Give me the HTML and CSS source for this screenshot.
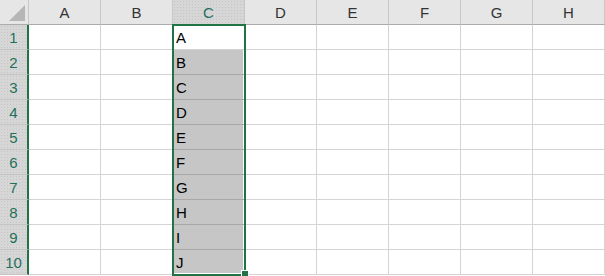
FILE: index.html
```html
<!DOCTYPE html>
<html lang="ja">
<head>
    <meta charset="UTF-8">
    <title>Sheet1</title>
    <link rel="stylesheet" href="styles.css">
</head>
<body>
    <div class="sheet">
        <div class="corner"><span class="tri"></span></div>
        <div class="col-head">A</div>
        <div class="col-head">B</div>
        <div class="col-head sel">C</div>
        <div class="col-head">D</div>
        <div class="col-head">E</div>
        <div class="col-head">F</div>
        <div class="col-head">G</div>
        <div class="col-head">H</div>

        <div class="row-head">1</div>
        <div class="cell"></div><div class="cell"></div><div class="cell active">A</div>
        <div class="cell"></div><div class="cell"></div><div class="cell"></div><div class="cell"></div><div class="cell"></div>

        <div class="row-head">2</div>
        <div class="cell"></div><div class="cell"></div><div class="cell picked">B</div>
        <div class="cell"></div><div class="cell"></div><div class="cell"></div><div class="cell"></div><div class="cell"></div>

        <div class="row-head">3</div>
        <div class="cell"></div><div class="cell"></div><div class="cell picked">C</div>
        <div class="cell"></div><div class="cell"></div><div class="cell"></div><div class="cell"></div><div class="cell"></div>

        <div class="row-head">4</div>
        <div class="cell"></div><div class="cell"></div><div class="cell picked">D</div>
        <div class="cell"></div><div class="cell"></div><div class="cell"></div><div class="cell"></div><div class="cell"></div>

        <div class="row-head">5</div>
        <div class="cell"></div><div class="cell"></div><div class="cell picked">E</div>
        <div class="cell"></div><div class="cell"></div><div class="cell"></div><div class="cell"></div><div class="cell"></div>

        <div class="row-head">6</div>
        <div class="cell"></div><div class="cell"></div><div class="cell picked">F</div>
        <div class="cell"></div><div class="cell"></div><div class="cell"></div><div class="cell"></div><div class="cell"></div>

        <div class="row-head">7</div>
        <div class="cell"></div><div class="cell"></div><div class="cell picked">G</div>
        <div class="cell"></div><div class="cell"></div><div class="cell"></div><div class="cell"></div><div class="cell"></div>

        <div class="row-head">8</div>
        <div class="cell"></div><div class="cell"></div><div class="cell picked">H</div>
        <div class="cell"></div><div class="cell"></div><div class="cell"></div><div class="cell"></div><div class="cell"></div>

        <div class="row-head">9</div>
        <div class="cell"></div><div class="cell"></div><div class="cell picked">I</div>
        <div class="cell"></div><div class="cell"></div><div class="cell"></div><div class="cell"></div><div class="cell"></div>

        <div class="row-head">10</div>
        <div class="cell"></div><div class="cell"></div><div class="cell picked last">J</div>
        <div class="cell"></div><div class="cell"></div><div class="cell"></div><div class="cell"></div><div class="cell"></div>

        <!-- range C1:C10 -->
        <div class="range"></div>
        <div class="fill-handle"></div>
    </div>
</body>
</html>
```

FILE: styles.css
```css
body {
    margin: 0;
    padding: 0;
    background: #ffffff;
    font-family: 'Liberation Sans', Arial, sans-serif;
    font-size: 15px;
}
.sheet {
    position: relative;
    display: grid;
    grid-template-columns: 29px repeat(8, 72px);
    grid-template-rows: repeat(11, 25px);
    width: 605px;
    height: 276px;
    overflow: hidden;
}
.sheet > div {
    box-sizing: border-box;
}
.corner {
    position: relative;
    background: #e6e6e6;
    border-right: 1px solid #c8c8c8;
    border-bottom: 1px solid #ababab;
}
.tri {
    position: absolute;
    right: 3px;
    bottom: 3px;
    width: 0;
    height: 0;
    border-left: 16px solid transparent;
    border-bottom: 16px solid #b6b6b6;
}
.col-head {
    display: flex;
    align-items: center;
    justify-content: center;
    background: #e6e6e6;
    color: #333333;
    border-right: 1px solid #c8c8c8;
    border-bottom: 1px solid #ababab;
    padding-top: 1px;
}
.col-head.sel,
.row-head {
    background-color: #d6d6d6;
    background-image: radial-gradient(#c6c6c6 0.6px, transparent 0.8px);
    background-size: 3px 3px;
    color: #1f6f5c;
}
.row-head {
    display: flex;
    align-items: center;
    justify-content: center;
    border-right: 2px solid #217346;
    border-bottom: 1px solid #c4c4c4;
    padding-top: 1px;
}
.cell {
    display: flex;
    align-items: flex-end;
    padding: 0 0 3px 3px;
    color: #000000;
    border-right: 1px solid #d4d4d4;
    border-bottom: 1px solid #d4d4d4;
}
.cell.picked {
    background: #c6c6c6;
    border-bottom-color: #a8a8a8;
    box-shadow: inset -1px 0 0 #ffffff;
}
.cell.picked.last {
    box-shadow: inset -1px -1px 0 #ffffff;
}
/* selection frame */
.range {
    position: absolute;
    left: 172px;
    top: 24px;
    width: 74px;
    height: 252px;
    border: 2px solid #217346;
    box-sizing: border-box;
    pointer-events: none;
}
.fill-handle {
    position: absolute;
    left: 241px;
    top: 270px;
    width: 8px;
    height: 8px;
    background: #217346;
    border: 1px solid #ffffff;
}
```
